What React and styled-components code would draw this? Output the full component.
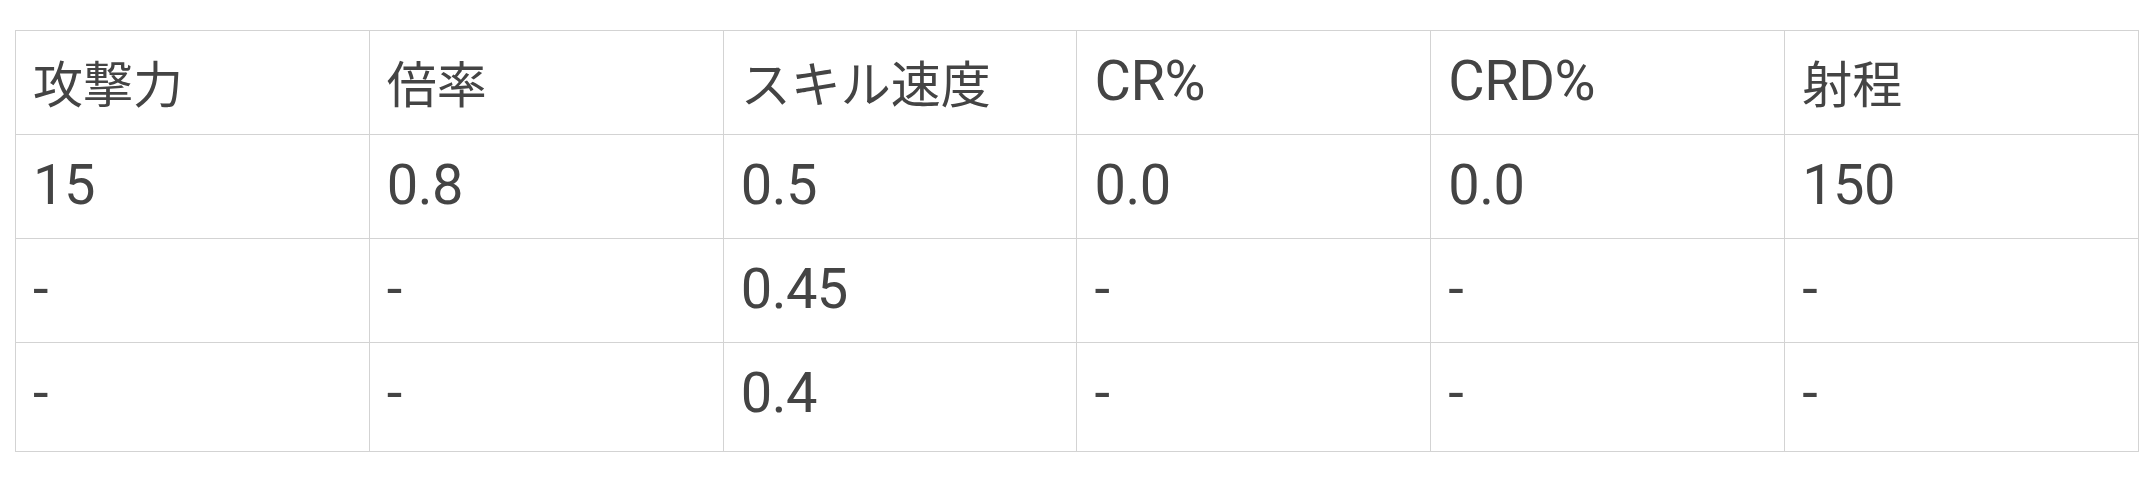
import React from "react";
import styled, { createGlobalStyle } from "styled-components";

const Global = createGlobalStyle`
  html, body { margin: 0; padding: 0; background: #ffffff; }
  body { font-family: Roboto, "Noto Sans CJK JP", sans-serif; }
`;

const Page = styled.div`
  padding: 30px 17px 0 15px;
`;

const Table = styled.table`
  width: 2124px;
  border-collapse: collapse;
  table-layout: fixed;
  color: #444444;
`;

const Cell = styled.td`
  border: 1px solid #d3d3d3;
  height: ${(p) => (p.$last ? 109 : 104)}px;
  padding: 0 16px ${(p) => (p.$last ? 9 : 4)}px 17px;
  box-sizing: border-box;
  vertical-align: middle;
  text-align: left;
  font-weight: 400;
  line-height: 1;
  font-family: ${(p) =>
    p.$cjk ? '"Noto Sans CJK JP", sans-serif' : 'Roboto, "Noto Sans CJK JP", sans-serif'};
  font-size: ${(p) => (p.$cjk ? 50 : 56)}px;
  letter-spacing: ${(p) => (p.$cjk ? 0 : -0.5)}px;
`;

const head = [
  { t: "攻撃力", cjk: true },
  { t: "倍率", cjk: true },
  { t: "スキル速度", cjk: true },
  { t: "CR%", cjk: false },
  { t: "CRD%", cjk: false },
  { t: "射程", cjk: true },
];
const rows = [
  ["15", "0.8", "0.5", "0.0", "0.0", "150"],
  ["-", "-", "0.45", "-", "-", "-"],
  ["-", "-", "0.4", "-", "-", "-"],
];

export default function App() {
  return (
    <Page>
      <Global />
      <Table>
        <tbody>
          <tr>
            {head.map((h) => (
              <Cell as="th" key={h.t} $cjk={h.cjk}>{h.t}</Cell>
            ))}
          </tr>
          {rows.map((r, i) => (
            <tr key={i}>
              {r.map((c, j) => (
                <Cell key={j} $last={i === rows.length - 1}>{c}</Cell>
              ))}
            </tr>
          ))}
        </tbody>
      </Table>
    </Page>
  );
}
